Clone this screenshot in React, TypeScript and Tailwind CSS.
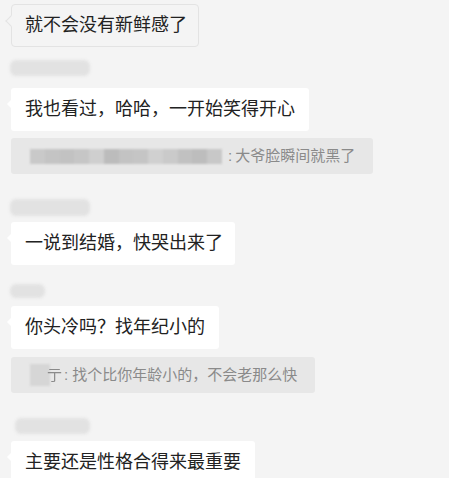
const font = { fontFamily: '"Liberation Sans", "Noto Sans CJK SC", sans-serif' };

function NameBlur({ width, height = 16, left = 10, mt }: { width: number; height?: number; left?: number; mt: string }) {
  return (
    <div className={`${mt} flex`}>
      <div
        className="rounded-[6px] bg-[#e2e2e2] blur-[1.5px]"
        style={{ width, height, marginLeft: left - 11 }}
      />
    </div>
  );
}

function Bubble({
  text,
  right,
  mt,
  first,
}: {
  text: string;
  right: number;
  mt: string;
  first?: boolean;
}) {
  return (
    <div className={`${mt} flex`}>
      <div
        className={
          first
            ? "relative flex h-[43px] items-center rounded-[4px] border border-[#e3e3e3] bg-[#f4f4f4] pl-[13px] text-[18px] text-[#222]"
            : "relative flex h-[43px] items-center rounded-[3px] bg-white pl-[14px] text-[18px] text-[#222]"
        }
        style={{ width: right - 11 }}
      >
        {first ? (
          <span className="absolute left-[-5px] top-[12px] h-[8px] w-[8px] rotate-45 border-b border-l border-[#e3e3e3] bg-[#f4f4f4]" />
        ) : (
          <span className="absolute left-[-4px] top-[12px] h-0 w-0 border-y-[4px] border-r-[4px] border-y-transparent border-r-white" />
        )}
        <span className="relative whitespace-nowrap">{text}</span>
      </div>
    </div>
  );
}

const mosaic = ["#c9c9c9", "#c4c4c4", "#c2c2c2", "#c6c6c6", "#cfcfcf", "#bcbcbc", "#c3c3c3", "#c5c5c5", "#d0d0d0", "#cacaca", "#c1c1c1", "#bdbdbd", "#c8c8c8"];

export default function App() {
  return (
    <div className="h-[478px] w-[449px] overflow-hidden bg-[#f4f4f4] pl-[11px]" style={font}>
      <div className="h-[4px]" />
      <Bubble first text="就不会没有新鲜感了" right={199} mt="mt-0" />

      <NameBlur width={80} mt="mt-[13px]" />
      <Bubble text="我也看过，哈哈，一开始笑得开心" right={309} mt="mt-[12px]" />

      <div className="mt-[7px] flex">
        <div className="flex h-[36px] w-[362px] items-center rounded-[3px] bg-[#e7e7e7] pl-[19px] text-[15px] text-[#8a8a8a]">
          <div className="flex h-[15px] w-[192px] blur-[1px]">
            {mosaic.map((c, i) => (
              <div key={i} className="h-full flex-1" style={{ backgroundColor: c }} />
            ))}
          </div>
          <span className="ml-[6px]">:</span>
          <span className="ml-[3px] whitespace-nowrap">大爷脸瞬间就黑了</span>
        </div>
      </div>

      <NameBlur width={80} height={17} mt="mt-[25px]" />
      <Bubble text="一说到结婚，快哭出来了" right={235} mt="mt-[6px]" />

      <NameBlur width={35} height={14} mt="mt-[19px]" />
      <Bubble text="你头冷吗？找年纪小的" right={219} mt="mt-[8px]" />

      <div className="mt-[8px] flex">
        <div className="flex h-[36px] w-[304px] items-center rounded-[3px] bg-[#e7e7e7] pl-[19px] text-[15px] text-[#8a8a8a]">
          <div className="h-[22px] w-[20px] bg-[#d6d6d6] blur-[1px]" />
          <span className="-ml-[3px] blur-[0.4px]">亍</span>
          <span className="ml-[2px]">:</span>
          <span className="ml-[4px] whitespace-nowrap">找个比你年龄小的，不会老那么快</span>
        </div>
      </div>

      <NameBlur width={75} left={15} mt="mt-[25px]" />
      <Bubble text="主要还是性格合得来最重要" right={255} mt="mt-[7px]" />
    </div>
  );
}
